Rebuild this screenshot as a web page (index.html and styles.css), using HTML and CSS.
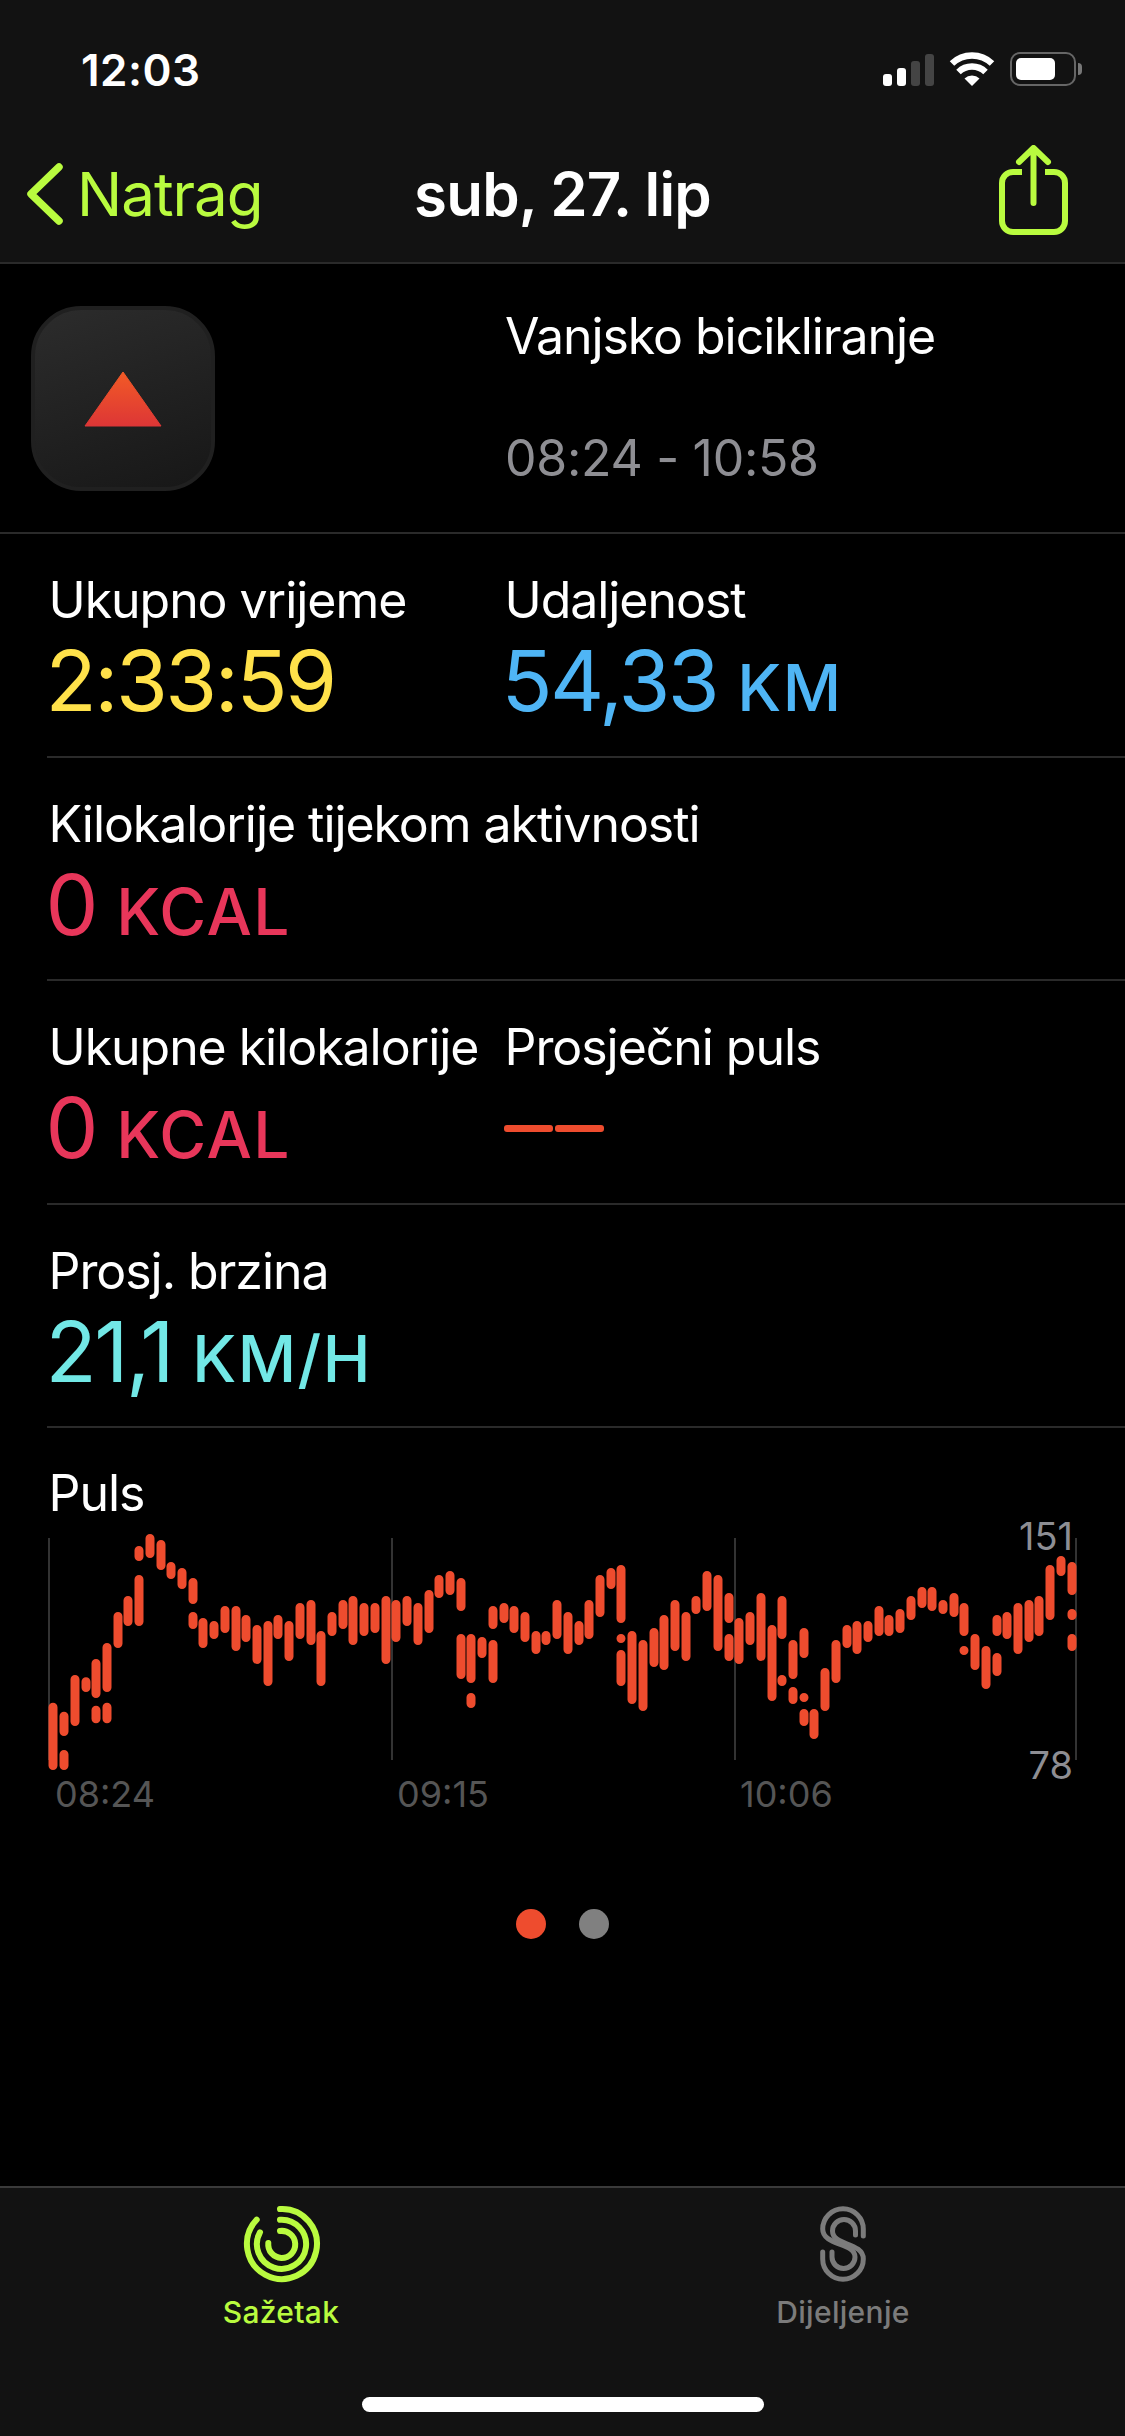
FILE: index.html
```html
<!DOCTYPE html>
<html lang="en">
<head>
    <meta charset="UTF-8">
    <meta name="viewport" content="width=device-width, initial-scale=1.0">
    <title>Vanjsko bicikliranje</title>
    <link rel="stylesheet" href="styles.css">
</head>
<body>

    <div class="page">
        <header class="top-bar">
            <!-- Status bar -->
            <div class="status">
                <span class="clock">12:03</span>
                <div class="status-icons">
                    <div class="signal">
                        <span class="signal-bar bar-1"></span>
                        <span class="signal-bar bar-2"></span>
                        <span class="signal-bar bar-3"></span>
                        <span class="signal-bar bar-4"></span>
                    </div>
                    <svg class="wifi" width="46" height="34" viewBox="0 0 46 34">
                        <path d="M23 34 L15.5 26.5 A11 11 0 0 1 30.5 26.5 Z" fill="#fff"/>
                        <path d="M9.5 20 A19.5 19.5 0 0 1 36.500 20" fill="none" stroke="#fff" stroke-width="6.500"/>
                        <path d="M3 11.500 A29 29 0 0 1 43 11.500" fill="none" stroke="#fff" stroke-width="6.500"/>
                    </svg>
                    <div class="battery">
                        <div class="battery-body"><span class="battery-fill"></span></div>
                        <span class="battery-nub"></span>
                    </div>
                </div>
            </div>

            <!-- Navigation -->
            <nav class="nav">
                <div class="back">
                    <svg class="chevron" width="38" height="62" viewBox="0 0 38 62">
                        <path d="M33 4 L5 31 L33 58" fill="none" stroke="#b9fb3f" stroke-width="7.500" stroke-linecap="round" stroke-linejoin="round"/>
                    </svg>
                    <span>Natrag</span>
                </div>
                <h1 class="nav-title">sub, 27. lip</h1>
                <svg class="share" width="69" height="90" viewBox="0 0 69 90">
                    <path d="M23 27 H14 A11 11 0 0 0 3 38 V76 A11 11 0 0 0 14 87 H55 A11 11 0 0 0 66 76 V38 A11 11 0 0 0 55 27 H46" fill="none" stroke="#b9fb3f" stroke-width="6"/>
                    <path d="M34.500 58 V4 M20 17 L34.500 3 L49 17" fill="none" stroke="#b9fb3f" stroke-width="6" stroke-linecap="round" stroke-linejoin="round"/>
                </svg>
            </nav>
        </header>

        <main class="content">
            <!-- Workout title -->
            <section class="workout">
                <div class="app-icon">
                    <svg width="78" height="56" viewBox="0 0 78 56">
                        <defs>
                            <linearGradient id="triangle" x1="0" y1="0" x2="0" y2="1">
                                <stop offset="0" stop-color="#f25a26"/>
                                <stop offset="1" stop-color="#dd3636"/>
                            </linearGradient>
                        </defs>
                        <path d="M39 1 L77 55 H1 Z" fill="url(#triangle)" stroke="url(#triangle)" stroke-width="1" stroke-linejoin="round"/>
                    </svg>
                </div>
                <div class="workout-text">
                    <div class="workout-name">Vanjsko bicikliranje</div>
                    <div class="workout-time">08:24 - 10:58</div>
                </div>
            </section>

            <!-- Metrics -->
            <section class="row">
                <div class="metric">
                    <div class="label">Ukupno vrijeme</div>
                    <div class="value yellow">2:33:59</div>
                </div>
                <div class="metric">
                    <div class="label">Udaljenost</div>
                    <div class="value blue">54,33 <span class="unit">KM</span></div>
                </div>
            </section>

            <section class="row">
                <div class="metric wide">
                    <div class="label">Kilokalorije tijekom aktivnosti</div>
                    <div class="value pink">0 <span class="unit">KCAL</span></div>
                </div>
            </section>

            <section class="row">
                <div class="metric">
                    <div class="label">Ukupne kilokalorije</div>
                    <div class="value pink">0 <span class="unit">KCAL</span></div>
                </div>
                <div class="metric">
                    <div class="label">Prosječni puls</div>
                    <div class="value dashes"><span class="dash"></span><span class="dash"></span></div>
                </div>
            </section>

            <section class="row">
                <div class="metric wide">
                    <div class="label">Prosj. brzina</div>
                    <div class="value cyan">21,1 <span class="unit">KM/H</span></div>
                </div>
            </section>

            <!-- Heart rate chart -->
            <section class="chart-block">
                <div class="label chart-label">Puls</div>
                <svg class="chart" width="1125" height="300" viewBox="0 1520 1125 300">
                    <path d="M49 1538 V1760 M392 1538 V1760 M735 1538 V1760 M1076 1538 V1760" stroke="#333" stroke-width="2"/>
                    <path id="pulsBars" fill="none" stroke="#ee4c2e" stroke-width="9" stroke-linecap="round"/>
                    <text class="axis-time" x="55" y="1807">08:24</text>
                    <text class="axis-time" x="397" y="1807">09:15</text>
                    <text class="axis-time" x="740" y="1807">10:06</text>
                    <text class="axis-value" x="1073" y="1550" text-anchor="end">151</text>
                    <text class="axis-value" x="1073" y="1779" text-anchor="end">78</text>
                </svg>
            </section>

            <div class="pager">
                <span class="pager-dot active"></span>
                <span class="pager-dot"></span>
            </div>
        </main>

        <!-- Tab bar -->
        <footer class="tab-bar">
            <div class="tabs">
                <div class="tab tab-active">
                    <svg class="tab-icon" width="95" height="95" viewBox="0 0 95 95">
                        <g fill="none" stroke="#b9fb3f" stroke-width="6" stroke-linecap="round">
                            <path d="M46 11 A35 35 0 1 1 22.700 21.700"/>
                            <path d="M46 21.700 A24.600 24.600 0 1 1 26 34.300"/>
                            <path d="M46 33 A13.500 13.500 0 1 1 34.300 45"/>
                        </g>
                    </svg>
                    <span>Sažetak</span>
                </div>
                <div class="tab">
                    <svg class="tab-icon" width="95" height="95" viewBox="0 0 95 95">
                        <g fill="none" stroke="#7b7b7b" stroke-width="5" stroke-linecap="round">
                            <path d="M67.300 38 V31 A20.300 20.300 0 0 0 26.700 31 C26.700 48 59 44 59 59 A11.500 11.500 0 0 1 36 59 V54"/>
                            <path d="M59.500 37 V33 A11.500 11.500 0 0 0 36.500 33 C36.500 48 67.300 44 67.300 61 A20.300 20.300 0 0 1 26.700 61 V54"/>
                        </g>
                    </svg>
                    <span>Dijeljenje</span>
                </div>
            </div>
            <div class="home-bar"></div>
        </footer>
    </div>

    <script src="script.js"></script>
</body>
</html>
```

FILE: styles.css
```css
body {
    margin: 0;
    background-color: #000000;
    font-family: Inter, "Noto Sans", sans-serif;
    color: #ffffff;
}

.page {
    display: flex;
    flex-direction: column;
    width: 1125px;
    height: 2436px;
    overflow: hidden;
}

/* Top bar */
.top-bar {
    height: 262px;
    flex-shrink: 0;
    background-color: #121212;
    border-bottom: 2px solid #2a2a2a;
}

.status {
    display: flex;
    justify-content: space-between;
    align-items: flex-end;
    height: 86px;
    padding: 0 43px 0 81px;
    box-sizing: border-box;
}

.clock {
    font-size: 44px;
    line-height: 32px;
    font-weight: 600;
    letter-spacing: 0.5px;
}

.status-icons {
    display: flex;
    align-items: flex-end;
}

.signal {
    display: flex;
    align-items: flex-end;
    gap: 5px;
    margin-right: 15px;
}

.signal-bar {
    width: 9px;
    border-radius: 3px;
    background-color: #ffffff;
}

.bar-1 { height: 12px; }
.bar-2 { height: 18px; }
.bar-3 { height: 25px; background-color: #444444; }
.bar-4 { height: 32px; background-color: #444444; }

.wifi {
    margin-right: 15px;
}

.battery {
    display: flex;
    align-items: center;
}

.battery-body {
    width: 66px;
    height: 34px;
    padding: 4px;
    box-sizing: border-box;
    border: 2px solid #666666;
    border-radius: 10px;
}

.battery-fill {
    display: block;
    width: 39px;
    height: 100%;
    border-radius: 5px;
    background-color: #ffffff;
}

.battery-nub {
    width: 4px;
    height: 12px;
    margin-left: 2px;
    border-radius: 0 4px 4px 0;
    background-color: #777777;
}

.nav {
    display: grid;
    grid-template-columns: 1fr auto 1fr;
    align-items: center;
    height: 130px;
    margin-top: 43px;
    padding: 0 26px;
    box-sizing: border-box;
}

.back {
    display: flex;
    align-items: center;
    gap: 13px;
    color: #b9fb3f;
    font-size: 60px;
    letter-spacing: -1px;
}

.nav-title {
    margin: 0;
    font-size: 60px;
    font-weight: 600;
    letter-spacing: -0.8px;
}

.share {
    justify-self: end;
    margin: -8px 31px 0 0;
}

/* Content */
.content {
    flex: 1;
}

.workout {
    display: grid;
    grid-template-columns: 474px 1fr;
    height: 270px;
    padding: 42px 0 0 31px;
    box-sizing: border-box;
    border-bottom: 2px solid #2a2a2a;
}

.app-icon {
    display: flex;
    align-items: center;
    justify-content: center;
    width: 184px;
    height: 185px;
    box-sizing: border-box;
    border: 4px solid #202020;
    border-radius: 50px;
    background: linear-gradient(160deg, #2c2c2c, #171717);
}

.workout-name {
    font-size: 50px;
    line-height: 60px;
    letter-spacing: -1.05px;
}

.workout-time {
    margin-top: 62px;
    color: #8e8e93;
    font-size: 50px;
    line-height: 60px;
    letter-spacing: -0.3px;
}

.row {
    display: grid;
    grid-template-columns: 456px 1fr;
    height: 223.5px;
    margin-left: 47px;
    padding: 36px 0 0 1.5px;
    box-sizing: border-box;
    border-bottom: 2px solid #2a2a2a;
}

.wide {
    grid-column: 1 / -1;
}

.label {
    font-size: 50px;
    line-height: 60px;
    letter-spacing: -1.05px;
}

.value {
    margin-top: 9px;
    margin-left: -3px;
    font-size: 84px;
    line-height: 84px;
    letter-spacing: -2.5px;
}

.unit {
    margin-left: -1px;
    font-size: 64px;
    font-weight: 500;
    letter-spacing: 1.5px;
}

.yellow { color: #ffe14a; }
.blue { color: #4fb5f5; }
.pink { color: #e8365a; }
.cyan { color: #72e8e6; }

.dashes {
    display: flex;
    gap: 2px;
    height: 84px;
    margin-left: -1px;
    padding-top: 39px;
    box-sizing: border-box;
}

.dash {
    width: 49px;
    height: 7px;
    border-radius: 3px;
    background-color: #ee4c2e;
}

.chart-block {
    padding-top: 35px;
}

.chart-label {
    height: 57px;
    margin-left: 48.5px;
}

.chart {
    display: block;
    overflow: visible;
}

.axis-time {
    font-size: 36px;
    fill: #555555;
}

.axis-value {
    font-size: 38px;
    fill: #8e8e93;
}

.pager {
    display: flex;
    justify-content: center;
    gap: 33px;
    margin-top: 89px;
}

.pager-dot {
    width: 30px;
    height: 30px;
    border-radius: 50%;
    background-color: #808080;
}

.pager-dot.active {
    background-color: #ee4c2e;
}

/* Tab bar */
.tab-bar {
    height: 248px;
    flex-shrink: 0;
    position: relative;
    background-color: #121212;
    border-top: 2px solid #3a3a3a;
}

.tabs {
    display: grid;
    grid-template-columns: 281px 1fr;
    padding-top: 10px;
}

.tab {
    display: flex;
    flex-direction: column;
    align-items: center;
    width: 140px;
    color: #7b7b7b;
    font-size: 30px;
    line-height: 36px;
    font-weight: 500;
    letter-spacing: 0.3px;
}

.tab:first-child {
    margin-left: 211px;
}

.tab:last-child {
    margin-left: 492px;
}

.tab-active {
    color: #b9fb3f;
}

.tab-icon {
    margin-bottom: 1px;
}

.home-bar {
    position: absolute;
    left: 362px;
    bottom: 24px;
    width: 402px;
    height: 15px;
    border-radius: 8px;
    background-color: #ffffff;
}
```

FILE: script.js
```js
// Bars are [x, top, bottom] measured on the three chart crops (3x scale)
const crops = [
    { left: 0, bars: [
        [159, 728, 930], [192, 755, 828], [192, 870, 930], [225, 645, 798], [258, 652, 696],
        [288, 597, 714], [288, 737, 790], [321, 549, 696], [321, 728, 790], [354, 456, 564],
        [384, 408, 498], [417, 258, 303], [417, 345, 498], [450, 222, 294], [483, 240, 330],
        [513, 306, 357], [546, 324, 387], [579, 354, 432], [579, 456, 507], [609, 474, 564],
        [642, 483, 537], [675, 438, 519], [708, 438, 573], [738, 465, 546], [771, 495, 612],
        [804, 483, 678], [834, 465, 537], [867, 483, 603], [900, 429, 537], [933, 420, 555],
        [963, 513, 678], [996, 456, 528], [1029, 420, 507], [1059, 408, 555], [1092, 429, 528]
    ] },
    { left: 370, bars: [
        [15, 429, 519], [48, 408, 612], [78, 420, 546], [111, 408, 498], [144, 429, 555],
        [177, 390, 519], [207, 345, 414], [240, 333, 405], [273, 354, 453], [273, 522, 657],
        [303, 522, 669], [303, 699, 744], [336, 531, 594], [369, 438, 507], [369, 540, 669],
        [402, 429, 489], [432, 438, 519], [465, 456, 546], [498, 513, 582], [528, 513, 555],
        [561, 420, 537], [594, 456, 582], [627, 483, 555], [657, 420, 537], [690, 345, 471],
        [723, 324, 387], [753, 315, 489], [753, 522, 546], [753, 570, 678], [786, 513, 732],
        [819, 540, 753], [852, 504, 621], [882, 465, 630], [915, 420, 573], [948, 456, 603],
        [978, 408, 462], [1011, 333, 453], [1044, 345, 573], [1077, 399, 489], [1077, 522, 603],
        [1107, 474, 612]
    ] },
    { left: 745, bars: [
        [15, 456, 555], [48, 399, 603], [81, 495, 723], [111, 408, 537], [111, 645, 678],
        [144, 540, 657], [144, 681, 732], [177, 504, 594], [177, 699, 723], [177, 747, 798],
        [207, 747, 837], [240, 624, 753], [273, 540, 669], [306, 495, 564], [336, 483, 582],
        [369, 483, 546], [402, 438, 528], [432, 465, 528], [465, 447, 519], [498, 408, 480],
        [531, 381, 444], [561, 381, 453], [594, 420, 462], [627, 399, 471], [657, 429, 528],
        [657, 558, 582], [690, 522, 630], [723, 558, 687], [756, 465, 528], [756, 579, 648],
        [786, 456, 537], [819, 429, 582], [852, 420, 546], [882, 408, 528], [915, 315, 480],
        [948, 288, 348], [981, 306, 405], [981, 447, 480], [981, 522, 573]
    ] }
];

const capRadius = 4.5;
const chartTop = 1460;
let d = "";

crops.forEach(crop => {
    crop.bars.forEach(([x, top, bottom]) => {
        const px = crop.left + x / 3;
        const y1 = chartTop + top / 3 + capRadius;
        const y2 = chartTop + bottom / 3 - capRadius;
        d += `M${px.toFixed(1)} ${y1.toFixed(1)} V${Math.max(y1, y2).toFixed(1)} `;
    });
});

document.getElementById("pulsBars").setAttribute("d", d);
```
